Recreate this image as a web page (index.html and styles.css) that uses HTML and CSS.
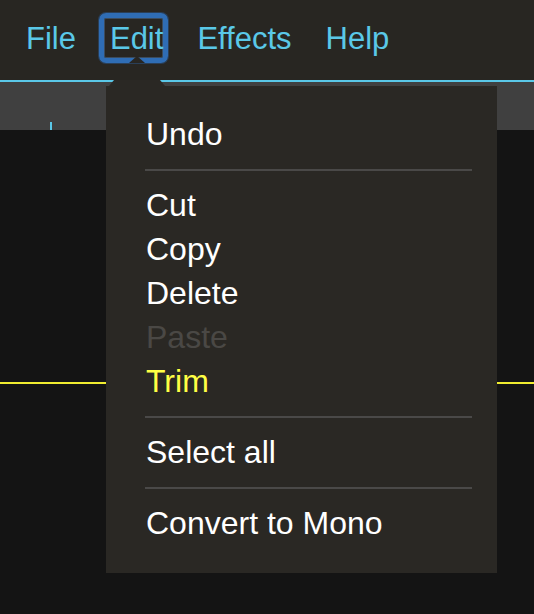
FILE: index.html
```html
<!DOCTYPE html>
<html>
<head>
<meta charset="utf-8">
<link rel="stylesheet" href="styles.css">
</head>
<body>
<header class="menubar">
  <nav class="nav">
    <span class="nav-item">File</span>
    <span class="nav-item active"><span class="label">Edit</span><span class="caret"></span></span>
    <span class="nav-item">Effects</span>
    <span class="nav-item">Help</span>
  </nav>
</header>
<div class="toolbar"><span class="tick"></span></div>
<main class="canvas">
  <div class="wave"></div>
</main>
<div class="menu">
  <div class="notch"></div>
  <div class="item">Undo</div>
  <div class="sep"></div>
  <div class="item">Cut</div>
  <div class="item">Copy</div>
  <div class="item">Delete</div>
  <div class="item disabled">Paste</div>
  <div class="item highlight">Trim</div>
  <div class="sep"></div>
  <div class="item">Select all</div>
  <div class="sep"></div>
  <div class="item">Convert to Mono</div>
</div>
</body>
</html>
```

FILE: styles.css
```css
html, body {
  margin: 0;
  padding: 0;
  background: #141414;
  font-family: "Liberation Sans", Arial, sans-serif;
  height: 100%;
  overflow: hidden;
}
.menubar {
  height: 80px;
  background: #282622;
  border-bottom: 2px solid #5ac8e8;
  box-sizing: content-box;
}
.nav {
  display: flex;
  align-items: center;
  height: 80px;
  padding-left: 9px;
}
.nav-item {
  position: relative;
  color: #5ac8e8;
  font-size: 31px;
  line-height: 40px;
  padding: 0 17px;
  margin-top: -2px;
}
.nav-item.active .label {
  position: relative;
}
.nav-item.active::before {
  content: "";
  position: absolute;
  left: 6px;
  right: 12px;
  top: -6px;
  bottom: -4px;
  border: 5px solid #2f6db5;
  border-radius: 7px;
  box-shadow: inset 0 0 0 1px #3c4c5e, 0 0 0 1px #2a3f58;
}
.caret {
  position: absolute;
  left: 50%;
  margin-left: -8px;
  bottom: -4px;
  width: 0;
  height: 0;
  border-left: 8px solid transparent;
  border-right: 8px solid transparent;
  border-bottom: 7px solid #282622;
}
.toolbar {
  position: relative;
  height: 48px;
  background: #404040;
}
.tick {
  position: absolute;
  left: 50px;
  bottom: 0;
  width: 2px;
  height: 8px;
  background: #5ac8e8;
}
.canvas {
  position: relative;
  height: 484px;
}
.wave {
  position: absolute;
  left: 0;
  right: 0;
  top: 252px;
  height: 2px;
  background: #f0ec30;
}
.menu {
  position: absolute;
  left: 106px;
  top: 86px;
  width: 391px;
  background: #2a2824;
  padding: 26px 25px 28px 40px;
  box-sizing: border-box;
}
.notch {
  position: absolute;
  left: 3px;
  top: -6px;
  width: 56px;
  height: 6px;
  background: #2a2824;
  clip-path: polygon(5px 0, 51px 0, 56px 6px, 0 6px);
}
.item {
  color: #ffffff;
  font-size: 32px;
  line-height: 44px;
  white-space: nowrap;
}
.item.disabled {
  color: #4a4845;
}
.item.highlight {
  color: #ffff44;
}
.sep {
  height: 2px;
  background: #4a4948;
  margin: 13px 0 12px -1px;
}
```
